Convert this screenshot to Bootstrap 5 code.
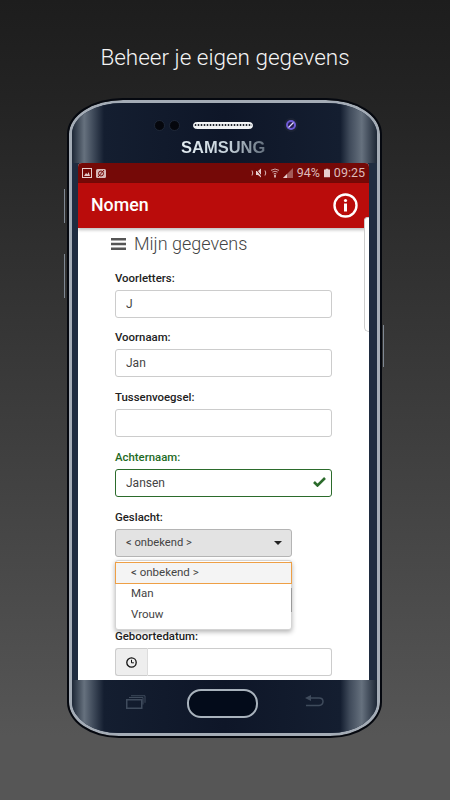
<!DOCTYPE html>
<html>
<head>
    <meta charset="UTF-8">
    <link href="https://cdn.jsdelivr.net/npm/bootstrap@5.3.0/dist/css/bootstrap.min.css" rel="stylesheet">
    <style>
        html, body { height: 800px; overflow: hidden; }
        body {
            background: linear-gradient(#1d1d1d, #232323 12%, #565656 92%);
            font-family: Roboto, sans-serif;
        }
        .promo-title {
            height: 100px;
            padding-top: 42px;
            font-family: Roboto, sans-serif;
            font-weight: 300;
            font-size: 22.5px;
            line-height: 30px;
            color: #f4f4f4;
        }
        .phone-wrap { width: 311px; margin-left: 69px; position: relative; }
        .side-btn { position: absolute; width: 1px; background: #7f8893; }
        .side-l1 { left: -5px; top: 89px; height: 34px; }
        .side-l2 { left: -5px; top: 154px; height: 44px; }
        .side-r1 { right: -4px; top: 225px; height: 42px; }
        .phone-body {
            height: 636px;
            padding: 0 8px 0 6px;
            overflow: hidden;
            border-radius: 54px 54px 50px 50px / 34px 34px 34px 34px;
            border: 3px solid #a4acb6;
            outline: 2px solid #05080f;
            background: #1f2c40;
        }
        .phone-top, .phone-bottom {
            margin: 0 -8px 0 -6px;
            background: linear-gradient(90deg, #1d2736, #66717e 4%, #3f4a5a 7%, #141e30 10.5%, #0e1628 50%, #141e30 88%, #3f4a5a 91%, #66717e 95%, #1d2736);
        }
        .phone-top { height: 60px; padding-top: 15px; }
        .cam-dot { width: 11px; height: 11px; border-radius: 50%; background: #05070d; border: 1px solid #1f2838; }
        .speaker {
            width: 60px; height: 7px; border-radius: 4px; border: 1.5px solid #f1f3f5;
            background: #f1f3f5 radial-gradient(circle, #20252e 0.9px, #f1f3f5 1.2px) 0 0 / 3px 4px;
        }
        .sensor { margin-left: 27px; display: block; }
        .top-row { padding-left: 82px; gap: 4px; }
        .top-row .speaker { margin-left: 9px; }
        .brand-text {
            font-family: "Liberation Sans", sans-serif;
            font-weight: 700;
            font-size: 16.5px;
            line-height: 16px;
            margin: 7px 0 0 109px;
            width: 86px;
            background: linear-gradient(90deg, #e4edf2, #c6d2db 55%, #5f6b79);
            -webkit-background-clip: text;
            background-clip: text;
            color: transparent;
        }
        .screen { width: 291px; height: 517px; background: #fff; overflow: hidden; position: relative; border-radius: 4px 4px 0 0; }
        .status-line { height: 20px; background: #750907; color: #ddbcbb; padding: 0 4px; font-size: 12.5px; line-height: 20px; }
        .app-bar { height: 45px; background: #ba0c0b; color: #fff; padding: 0 11px 0 13px; font-size: 17.8px; font-weight: 500; box-shadow: 0 2px 3px rgba(0,0,0,.25); position: relative; }
        .page-content { padding: 0 37px; }
        .page-head { height: 32px; margin-left: -4px; font-size: 18px; font-weight: 300; color: #444; line-height: 32px; gap: 8px; }
        .field-label { display: block; font-size: 11.4px; font-weight: 500; color: #222; line-height: 14px; margin: 0 0 5px; }
        .field-label.ok { color: #1f6a1f; }
        .form-control.app-input {
            height: 28px; min-height: 28px; padding: 0 10px; font-size: 12px; color: #444;
            border: 1px solid #ccc; border-radius: 3px; box-shadow: none;
        }
        .form-control.app-input.ok { border-color: #2b6b2b; }
        .field-group { height: 59.75px; padding-top: 7px; position: relative; }
        .field-group:first-of-type { padding-top: 11px; height: 63.3px; }
        .check-mark { position: absolute; right: 6px; top: 33px; }
        .select-btn {
            width: 177px; height: 28px; background: #e3e3e3; border: 1px solid #b4b4b4; border-radius: 3px;
            font-size: 11.2px; color: #444; padding: 0 10px; line-height: 26px;
        }
        .select-caret { width: 0; height: 0; border-left: 4px solid transparent; border-right: 4px solid transparent; border-top: 4px solid #222; margin-right: -1px; }
        .select-menu {
            position: absolute; left: 37px; top: 397px; width: 177px; height: 70px; background: #fff;
            border: 1px solid #d4d4d4; border-radius: 3px; box-shadow: 0 2px 5px rgba(0,0,0,.3);
            padding-top: 1px; font-size: 11.5px; color: #444;
        }
        .select-menu::after { content: ""; position: absolute; right: -1px; top: 27px; width: 1px; height: 24px; background: #9a9a9a; }
        .menu-item { height: 21px; line-height: 19px; padding-left: 15px; }
        .menu-item.current { height: 22px; background: #f4f4f4; border: 1px solid #ee9f45; margin: 0 -1px; }
        .clock-addon { width: 33px; background: #eee; border: 1px solid #ccc; border-right: 1px solid #ddd; border-radius: 3px 0 0 3px; }
        .time-group { height: 28px; }
        .time-group .form-control.app-input { border-left: 0; border-radius: 0 3px 3px 0; }
        .scroll-edge { position: absolute; right: 0; top: 54px; width: 5px; height: 115px; border: 1px solid #ccc; border-right: 0; border-radius: 5px 0 0 7px; background: #fff; }
        .phone-bottom { height: 53px; padding: 9px 53px 0 54px; }
        .nav-glyph { margin-top: 6px; }
        .home-key { width: 71px; height: 29px; margin-right: 6px; border-radius: 14px; background: #030b1a; border: 2px solid #a8b2bc; }
    </style>
</head>
<body>
    <div class="promo-title text-center">Beheer je eigen gegevens</div>

    <div class="phone-wrap">
        <div class="side-btn side-l1"></div>
        <div class="side-btn side-l2"></div>
        <div class="side-btn side-r1"></div>
        <div class="phone-body">
            <div class="phone-top">
                <div class="top-row d-flex align-items-center">
                    <div class="cam-dot"></div>
                    <div class="cam-dot"></div>
                    <div class="speaker"></div>
                    <svg class="sensor" width="14" height="14" viewBox="0 0 14 14"><circle cx="7" cy="7" r="7" fill="#1b2233"/><circle cx="7" cy="7" r="5" fill="#6e5ad6"/><circle cx="7" cy="7" r="3" fill="#241c4c"/><path d="M4.5 9.500l5-5" stroke="#e0d8ff" stroke-width="1.200"/></svg>
                </div>
                <div class="brand-text">SAMSUNG</div>
            </div>

            <div class="screen">
                <div class="status-line d-flex align-items-center">
                    <svg width="10" height="10" viewBox="0 0 10 10" class="me-1"><rect x=".5" y=".5" width="9" height="9" fill="none" stroke="#e6cfcf"/><path d="M2 8l2-3 1.500 1.500L6.500 4 8 8z" fill="#e6cfcf"/></svg>
                    <svg width="10" height="9" viewBox="0 0 10 9"><rect width="10" height="9" rx="1.500" fill="#d9b8b8"/><circle cx="5" cy="4.500" r="2.500" fill="none" stroke="#750907"/><path d="M2 8l6-7" stroke="#750907"/></svg>
                    <div class="ms-auto d-flex align-items-center">
                        <svg class="me-1" width="16" height="10" viewBox="0 0 16 10"><path d="M5 3h2l3-2.500v9L7 7H5z" fill="#e6cfcf"/><path d="M4 0l8 10" stroke="#750907"/><path d="M1 2.500q1.500 2.500 0 5M14 2.500q1.500 2.500 0 5" fill="none" stroke="#d9b8b8"/></svg>
                        <svg width="8" height="10" viewBox="0 0 9 10" class="me-1"><path d="M0 2q4.500-3 9 0M1.500 4q3-2 6 0M3 6q1.500-1 3 0" fill="none" stroke="#d9b8b8"/><path d="M3.500 7h2v3h-2z" fill="#d9b8b8"/></svg>
                        <svg class="me-1" width="10" height="10" viewBox="0 0 10 10"><path d="M10 0v10H0z" fill="#a35a58"/><path d="M4 6v4H0z" fill="#e6cfcf"/></svg>
                        <span>94%</span>
                        <svg width="6" height="10" viewBox="0 0 7 10" class="mx-1"><path d="M2 0h3v1h2v9H0V1h2z" fill="#e6cfcf"/></svg>
                        <span>09:25</span>
                    </div>
                </div>
                <div class="app-bar d-flex align-items-center justify-content-between">
                    <span>Nomen</span>
                    <svg width="25" height="25" viewBox="0 0 25 25"><circle cx="12.500" cy="12.500" r="11" fill="none" stroke="#fff" stroke-width="2.400"/><circle cx="12.500" cy="7.500" r="1.600" fill="#fff"/><rect x="11" y="10.500" width="3" height="8" fill="#fff"/></svg>
                </div>
                <div class="scroll-edge"></div>
                <div class="page-content">
                    <div class="page-head d-flex align-items-center">
                        <svg width="15" height="12" viewBox="0 0 15 12"><path d="M0 0h15v2.500H0zM0 4.750h15v2.500H0zM0 9.500h15V12H0z" fill="#555"/></svg>
                        <span>Mijn gegevens</span>
                    </div>
                    <form>
                        <div class="field-group">
                            <label class="field-label">Voorletters:</label>
                            <input class="form-control app-input" type="text" value="J">
                        </div>
                        <div class="field-group">
                            <label class="field-label">Voornaam:</label>
                            <input class="form-control app-input" type="text" value="Jan">
                        </div>
                        <div class="field-group">
                            <label class="field-label">Tussenvoegsel:</label>
                            <input class="form-control app-input" type="text">
                        </div>
                        <div class="field-group">
                            <label class="field-label ok">Achternaam:</label>
                            <input class="form-control app-input ok" type="text" value="Jansen">
                            <svg class="check-mark" width="13" height="11" viewBox="0 0 13 11"><path d="M1 6l3.500 3.500L12 2" fill="none" stroke="#2b6b2b" stroke-width="2.600"/></svg>
                        </div>
                        <div class="field-group">
                            <label class="field-label">Geslacht:</label>
                            <div class="select-btn d-flex align-items-center justify-content-between">
                                <span>&lt; onbekend &gt;</span>
                                <span class="select-caret"></span>
                            </div>
                        </div>
                        <div class="field-group"></div>
                        <div class="field-group">
                            <label class="field-label">Geboortedatum:</label>
                            <div class="d-flex time-group">
                                <div class="clock-addon flex-shrink-0 d-flex align-items-center justify-content-center">
                                    <svg width="11" height="11" viewBox="0 0 11 11"><circle cx="5.500" cy="5.500" r="4.700" fill="none" stroke="#111" stroke-width="1.300"/><path d="M5.500 2.800v3h2.400" fill="none" stroke="#111"/></svg>
                                </div>
                                <input class="form-control app-input" type="text">
                            </div>
                        </div>
                    </form>
                </div>
                <div class="select-menu">
                    <div class="menu-item current">&lt; onbekend &gt;</div>
                    <div class="menu-item">Man</div>
                    <div class="menu-item">Vrouw</div>
                </div>
            </div>

            <div class="phone-bottom d-flex justify-content-between align-items-start">
                <svg class="nav-glyph" width="20" height="14" viewBox="0 0 20 14"><rect x=".75" y="4.750" width="15" height="8.500" fill="none" stroke="#3f4b5c" stroke-width="1.500"/><path d="M3 2.500h14v7M5 .750h14v7" fill="none" stroke="#3f4b5c"/></svg>
                <div class="home-key"></div>
                <svg class="nav-glyph" width="19" height="13" viewBox="0 0 19 13"><path d="M0 3l6-3v6z" fill="#3f4b5c"/><path d="M5 3h9q4 0 4 3.500T14 10.500H1" fill="none" stroke="#3f4b5c" stroke-width="1.500"/></svg>
            </div>
        </div>
    </div>

    <script src="https://cdn.jsdelivr.net/npm/bootstrap@5.3.0/dist/js/bootstrap.bundle.min.js"></script>
</body>
</html>
